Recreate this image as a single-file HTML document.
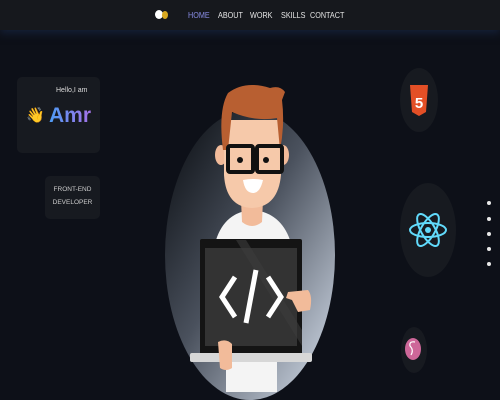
<!DOCTYPE html>
<html><head><meta charset="utf-8"><style>
*{margin:0;padding:0;box-sizing:border-box}
body{width:500px;height:400px;overflow:hidden;background:#0d1018;font-family:"Liberation Sans",sans-serif;position:relative}
.nav{position:absolute;left:0;top:0;width:500px;height:30px;background:#16181d;box-shadow:0 3px 8px rgba(30,50,90,.5)}
.nav span{position:absolute;top:10px;font-size:8.5px;color:#e6e6e6;transform:scaleX(.85);transform-origin:left}
.card{position:absolute;background:#171a20;border-radius:5px}
</style></head><body>
<div class="nav">
<div style="position:absolute;left:155px;top:10px;width:8px;height:9px;border-radius:50%;background:#fff"></div>
<div style="position:absolute;left:162px;top:11px;width:6px;height:8px;border-radius:50%;background:#d8a820"></div>
<span style="left:188px;color:#8a8ee8">HOME</span>
<span style="left:218px">ABOUT</span>
<span style="left:250px">WORK</span>
<span style="left:281px">SKILLS</span>
<span style="left:310px">CONTACT</span>
</div>
<div class="card" style="left:17px;top:77px;width:83px;height:76px">
<div style="position:absolute;left:39px;top:10px;font-size:7px;color:#ddd">Hello,I am</div>
<div style="position:absolute;left:9px;top:29px;font-size:15px">👋</div>
<div style="position:absolute;left:32px;top:27px;font-size:21px;font-weight:bold;background:linear-gradient(90deg,#4d9cf5,#a472e8);-webkit-background-clip:text;color:transparent">Amr</div>
</div>
<div class="card" style="left:45px;top:176px;width:55px;height:43px;text-align:center;font-size:6.5px;color:#ccc;line-height:13px;padding-top:7px">FRONT-END<br>DEVELOPER</div>
<svg width="500" height="400" style="position:absolute;left:0;top:0">
<defs>
<linearGradient id="g" x1="0.1" y1="0.1" x2="0.9" y2="0.9"><stop offset="0" stop-color="#15191f"/><stop offset=".45" stop-color="#4a515d"/><stop offset="1" stop-color="#c0c9d6"/></linearGradient>
</defs>
<ellipse cx="250" cy="255" rx="85" ry="145" fill="url(#g)"/>
<path d="M216 240 Q225 212 252 210 Q280 212 290 240 Z" fill="#f4f4f4"/>
<rect x="226" y="358" width="51" height="34" fill="#f4f4f4"/>
<path d="M241 200 L263 200 L262 222 Q252 230 242 222 Z" fill="#f2bb9a"/>
<ellipse cx="221" cy="155" rx="6" ry="10" fill="#f2bb9a"/>
<ellipse cx="283" cy="155" rx="6" ry="10" fill="#f2bb9a"/>
<path d="M224 120 L281 120 L281 175 Q278 207 252 208 Q226 207 224 175 Z" fill="#f6c9aa"/>
<path d="M223 150 Q218 110 228 93 Q245 80 270 88 Q280 85 285 92 L282 100 Q285 125 280 150 L277 118 Q255 122 232 112 L228 150 Z" fill="#b85f31"/>
<rect x="228" y="146" width="25" height="26" rx="2" fill="none" stroke="#111" stroke-width="4"/>
<rect x="257" y="146" width="25" height="26" rx="2" fill="none" stroke="#111" stroke-width="4"/>
<rect x="252" y="150" width="6" height="3" fill="#111"/>
<circle cx="240" cy="160" r="3" fill="#111"/><circle cx="266" cy="160" r="3" fill="#111"/>
<path d="M243 180 Q253 178 263 180 Q260 193 253 193 Q245 193 243 180 Z" fill="#fff"/>
<rect x="200" y="239" width="102" height="116" rx="2" fill="#141414"/>
<rect x="205" y="248" width="92" height="98" fill="#333"/>
<path d="M236 240 L246 240 L302 330 L302 346 Z" fill="#3c3c3c" opacity=".6"/>
<g stroke="#fff" stroke-width="5" fill="none">
<path d="M235 277 L222 297 L235 317"/>
<path d="M268 277 L281 297 L268 317"/>
<path d="M256 270 L246 323"/>
</g>
<rect x="190" y="353" width="122" height="9" rx="2" fill="#d7d7d7"/>
<path d="M288 292 L308 290 Q313 296 310 310 L298 312 L292 300 L286 298 Z" fill="#f2bb9a"/>
<path d="M218 342 Q226 338 232 344 L232 368 Q226 372 220 368 Z" fill="#f2bb9a"/>
<ellipse cx="419" cy="100" rx="19" ry="32" fill="#171a20"/>
<path d="M410 85 L428 85 L426 112 L419 116 L412 112 Z" fill="#e34f26"/>
<text x="419" y="108" font-size="15" font-weight="bold" fill="#fff" text-anchor="middle" font-family="Liberation Sans">5</text>
<ellipse cx="428" cy="230" rx="28" ry="47" fill="#171a20"/>
<g stroke="#61dafb" stroke-width="2" fill="none">
<ellipse cx="428" cy="230" rx="18" ry="7"/>
<ellipse cx="428" cy="230" rx="18" ry="7" transform="rotate(60 428 230)"/>
<ellipse cx="428" cy="230" rx="18" ry="7" transform="rotate(-60 428 230)"/>
</g>
<circle cx="428" cy="230" r="3" fill="#61dafb"/>
<ellipse cx="414" cy="350" rx="13" ry="23" fill="#171a20"/>
<ellipse cx="413" cy="349" rx="8" ry="11" fill="#cd6799"/>
<path d="M415 342 Q409 341 410 346 Q414 350 411 355" stroke="#fff" stroke-width="1.2" fill="none"/>
<g fill="#e8e8e8"><circle cx="489" cy="203" r="2"/><circle cx="489" cy="219" r="2"/><circle cx="489" cy="234" r="2"/><circle cx="489" cy="249" r="2"/><circle cx="489" cy="264" r="2"/></g>
</svg>
</body></html>
